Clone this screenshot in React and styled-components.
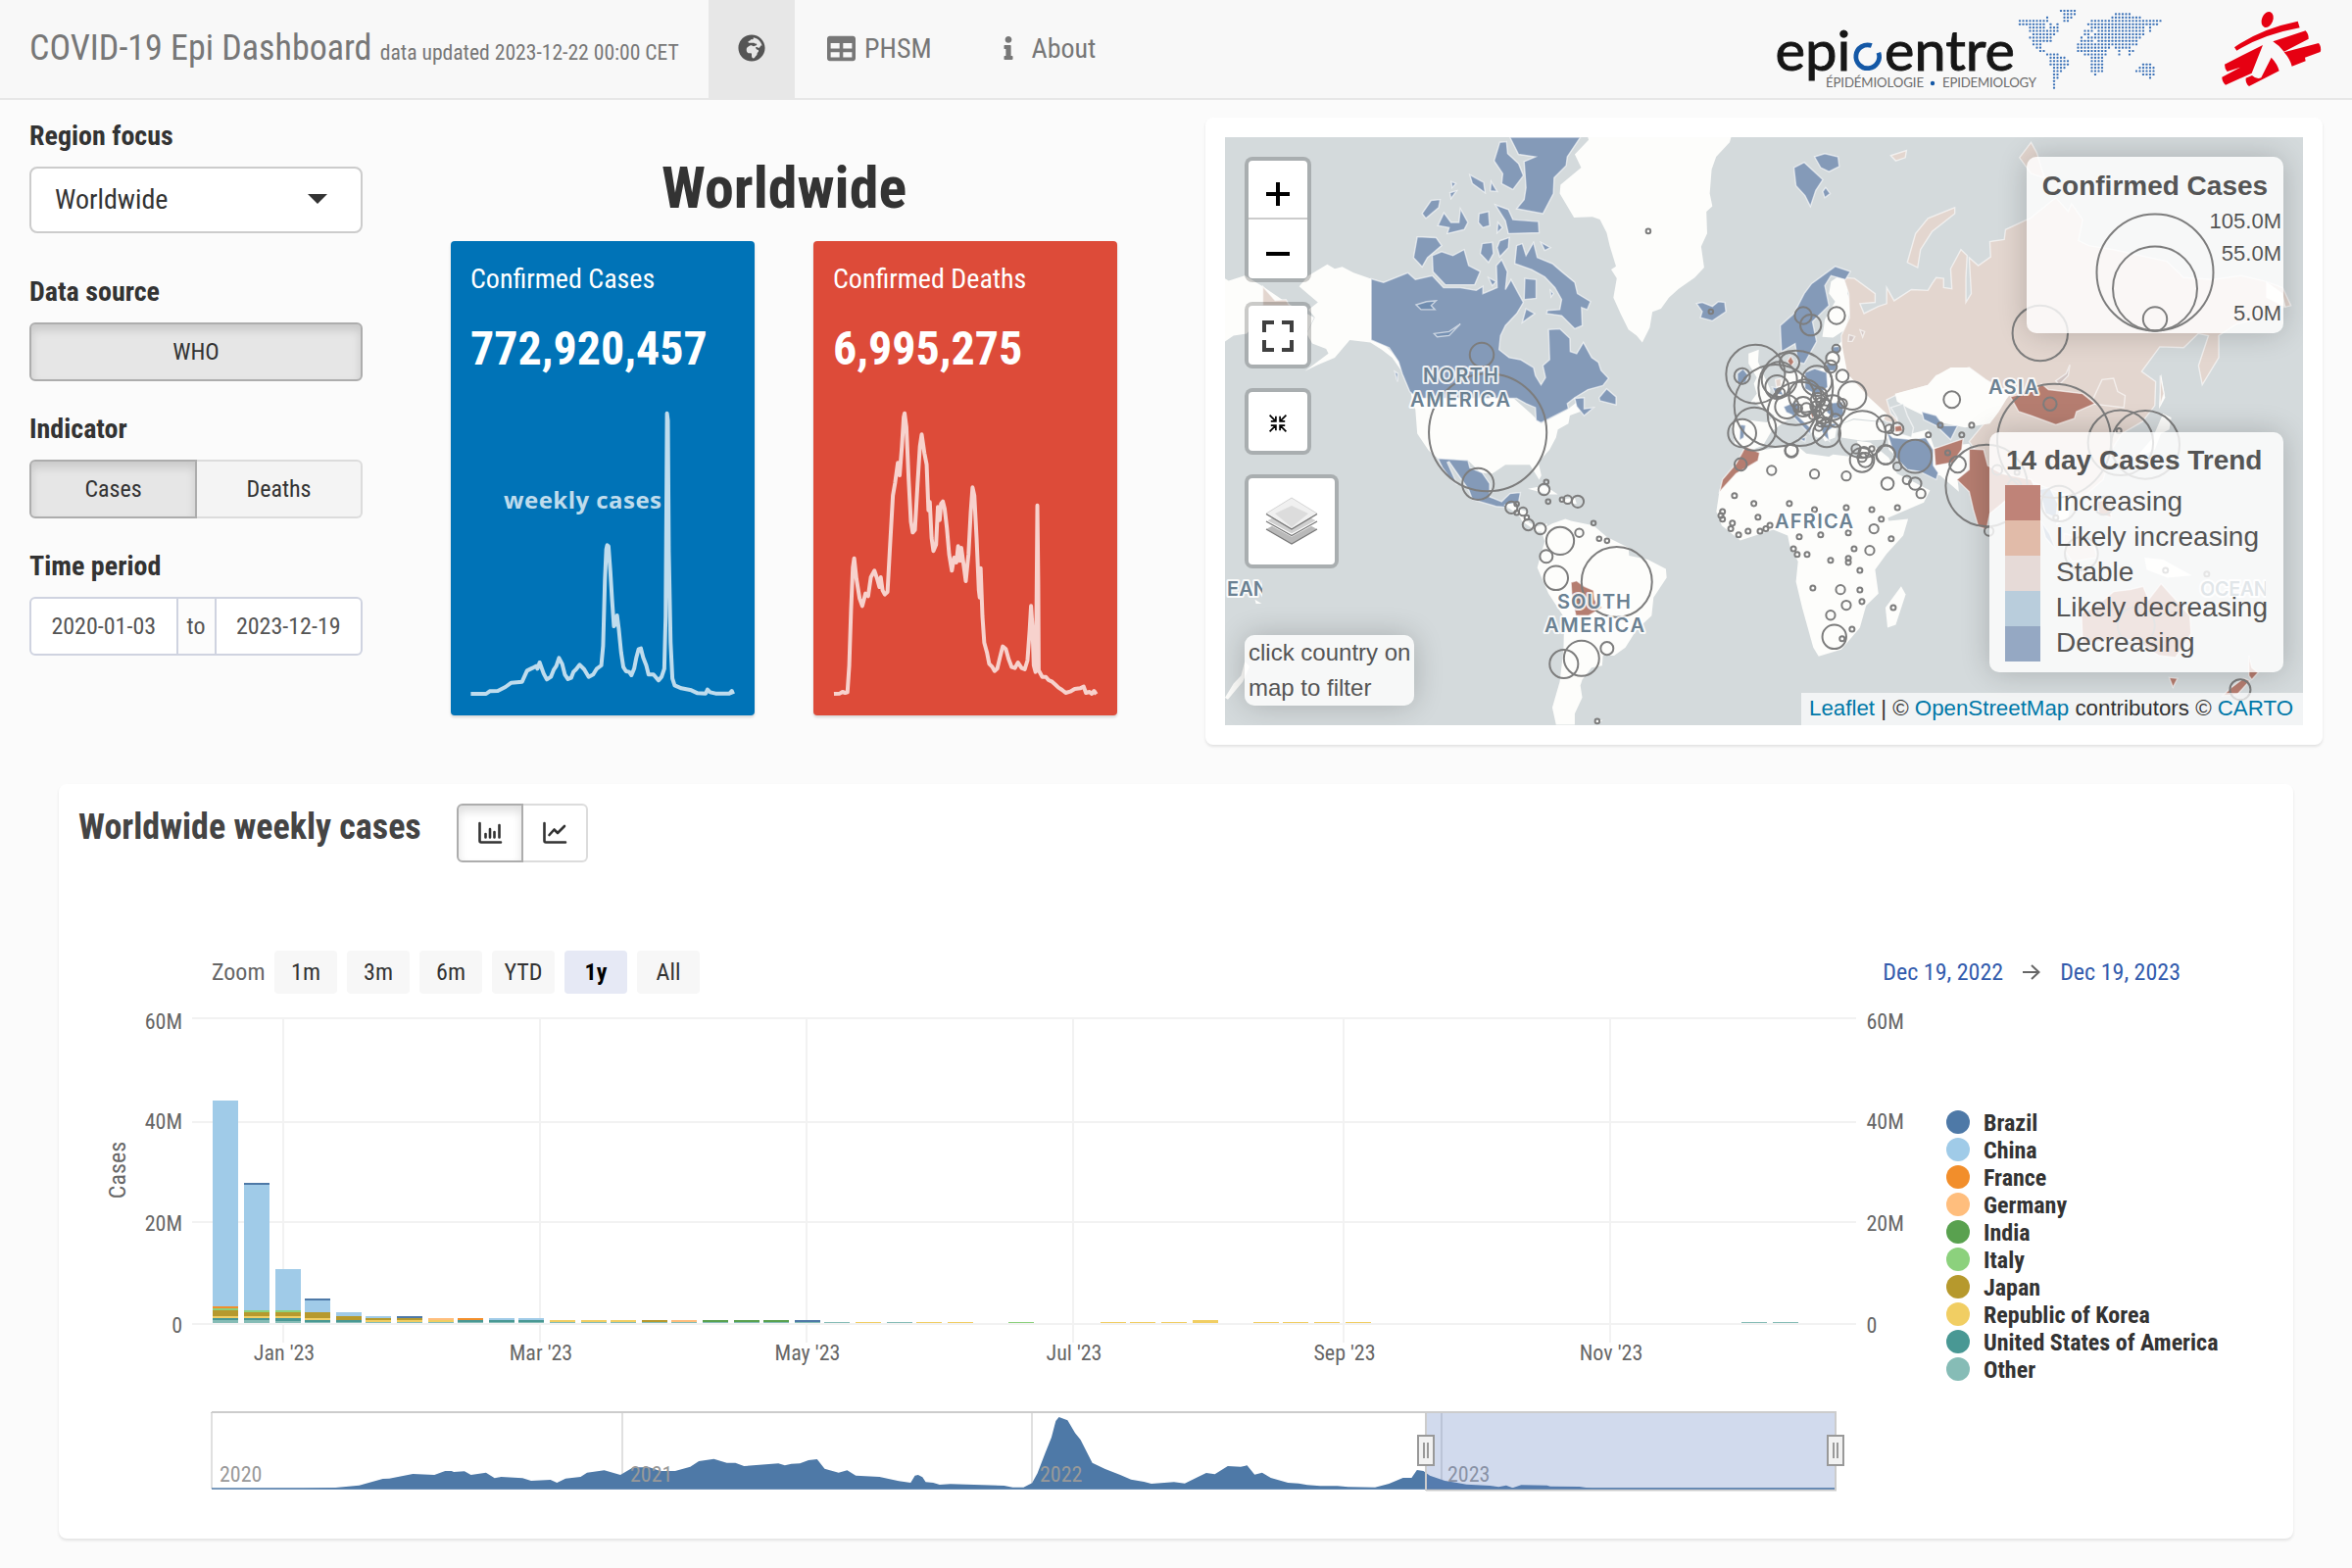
import React from "react";
import styled, { createGlobalStyle, css } from "styled-components";
import { FaGlobeAfrica, FaTable, FaInfo } from "react-icons/fa";

const condensed = `"Roboto Condensed", Roboto, "Liberation Sans", sans-serif`;
const arial = `"Liberation Sans", Arial, sans-serif`;

const GlobalStyle = createGlobalStyle`
  * { box-sizing: border-box; }
  body { margin: 0; background: #fbfbfb; font-family: ${condensed}; color: #333; }
  svg { display: block; }
`;

const Page = styled.div`
  width: 2400px;
  height: 1600px;
  overflow: hidden;
  background: #fbfbfb;
`;

/* ---------- header ---------- */
const Header = styled.header`
  height: 102px;
  display: flex;
  align-items: stretch;
  background: #f8f8f8;
  border-bottom: 2px solid #e7e7e7;
`;
const Brand = styled.div`
  width: 723px;
  padding-left: 30px;
  font-size: 36px;
  line-height: 98px;
  color: #777;
  white-space: nowrap;
`;
const Updated = styled.small`
  font-size: 21.6px;
`;
const NavTab = styled.a`
  display: flex;
  align-items: center;
  gap: ${(p) => p.$gap || 9}px;
  padding: 0 ${(p) => (p.$active ? 30 : 33)}px 2px;
  font-size: 28px;
  color: ${(p) => (p.$active ? "#555" : "#777")};
  background: ${(p) => (p.$active ? "#e7e7e7" : "transparent")};
`;
const Logos = styled.div`
  margin-left: auto;
`;

/* ---------- top row ---------- */
const TopRow = styled.div`
  display: flex;
  padding: 18px 30px 0;
`;
const Sidebar = styled.aside`
  width: 340px;
  margin-right: 90px;
`;
const Field = styled.div`
  margin-bottom: ${(p) => p.$gap || 30}px;
`;
const FieldLabel = styled.div`
  height: 40px;
  line-height: 38px;
  margin-bottom: 10px;
  font-size: 28px;
  font-weight: 700;
  color: #333;
`;
const Select = styled.div`
  height: 68px;
  padding: 0 34px 2px 24px;
  display: flex;
  align-items: center;
  justify-content: space-between;
  border: 2px solid #ccc;
  border-radius: 8px;
  background: #fff;
  font-size: 28px;
  color: #333;
`;
const Caret = styled.span`
  border: 10px solid transparent;
  border-top-color: #333;
  border-bottom: 0;
`;
const Group = styled.div`
  display: flex;
  height: 60px;
`;
const pressed = css`
  background: #e6e6e6;
  border-color: #adadad;
  box-shadow: inset 0 6px 10px rgba(0, 0, 0, 0.125);
  z-index: 1;
`;
const Toggle = styled.button`
  flex: ${(p) => (p.$width ? "none" : 1)};
  width: ${(p) => (p.$width ? p.$width + "px" : "auto")};
  padding: 0;
  display: flex;
  align-items: center;
  justify-content: center;
  font: 24px ${condensed};
  color: #333;
  background: #f4f4f4;
  border: 2px solid #dcdcdc;
  ${(p) => p.$active && pressed}
  ${(p) => p.$white && "background: #fff;"}
  &:first-child { border-radius: 6px 0 0 6px; }
  &:last-child { border-radius: 0 6px 6px 0; }
  &:only-child { border-radius: 6px; }
  & + & { border-left: 0; }
`;
const DateRange = styled.div`
  display: flex;
  height: 60px;
  border: 2px solid #cfd3e0;
  border-radius: 6px;
  background: #fff;
`;
const DateCell = styled.span`
  flex: ${(p) => (p.$mid ? "0 0 41px" : 1)};
  line-height: 56px;
  text-align: center;
  font-size: 24px;
  color: #555;
  ${(p) => p.$mid && "border: 2px solid #cfd3e0; border-width: 0 2px; background: #fcfcfc;"}
`;

const Stats = styled.section`
  width: 680px;
  margin-right: 90px;
  padding-top: 39px;
`;
const StatsTitle = styled.h1`
  margin: 0 0 21px;
  font-size: 60px;
  line-height: 66px;
  font-weight: 700;
  text-align: center;
  color: #333;
`;
const Cards = styled.div`
  display: flex;
  justify-content: space-between;
`;
const Card = styled.article`
  width: 310px;
  height: 484px;
  padding-top: 19px;
  border-radius: 4px;
  color: #fff;
  background: ${(p) => p.$color};
  box-shadow: 0 2px 3px rgba(0, 0, 0, 0.15);
`;
const CardTitle = styled.div`
  padding-left: 20px;
  font-size: 28px;
  line-height: 40px;
`;
const CardValue = styled.div`
  padding-left: 20px;
  margin-top: 21px;
  font-size: 48px;
  line-height: 60px;
  font-weight: 700;
`;

/* ---------- map ---------- */
const MapCard = styled.section`
  width: 1140px;
  height: 640px;
  padding: 20px;
  background: #fff;
  border-radius: 8px;
  box-shadow: 0 2px 3px rgba(0, 0, 0, 0.1);
`;
const MapFrame = styled.div`
  position: relative;
  width: 1100px;
  height: 600px;
  overflow: hidden;
  background: #d4dadc;
  font-family: ${arial};
`;
const MapControls = styled.div`
  position: absolute;
  left: 20px;
  top: 20px;
  display: flex;
  flex-direction: column;
  align-items: flex-start;
  gap: 20px;
`;
const Control = styled.div`
  border: 4px solid rgba(0, 0, 0, 0.2);
  border-radius: 8px;
  background: #fff;
  background-clip: padding-box;
`;
const ControlCell = styled.div`
  width: ${(p) => p.$size || 60}px;
  height: ${(p) => p.$height || p.$size || 60}px;
  padding-top: ${(p) => p.$drop || 0}px;
  display: flex;
  align-items: center;
  justify-content: center;
  & + & { border-top: 2px solid #ccc; }
`;
const Info = styled.div`
  position: absolute;
  background: rgba(255, 255, 255, 0.8);
  border-radius: 10px;
  box-shadow: 0 0 30px rgba(0, 0, 0, 0.2);
  color: #555;
`;
const Hint = styled(Info)`
  left: 20px;
  top: 508px;
  width: 173px;
  height: 72px;
  padding-left: 4px;
  font-size: 24px;
  line-height: 35.5px;
  white-space: nowrap;
`;
const SizeLegend = styled(Info)`
  right: 20px;
  top: 20px;
  width: 262px;
  height: 180px;
  padding-top: 14px;
`;
const LegendTitle = styled.div`
  font-size: 28px;
  line-height: 32px;
  font-weight: 700;
  text-align: center;
  white-space: nowrap;
`;
const TrendLegend = styled(Info)`
  right: 20px;
  top: 301px;
  width: 300px;
  height: 245px;
  padding: 12px 16px 0;
`;
const TrendTitle = styled(LegendTitle)`
  line-height: 33px;
  height: 32px;
  margin-bottom: 10px;
  text-align: left;
  padding-left: 1px;
`;
const TrendRow = styled.div`
  display: flex;
  gap: 16px;
  height: 36px;
  font-size: 28px;
  line-height: 34px;
  white-space: nowrap;
`;
const Swatch = styled.i`
  width: 36px;
  background: ${(p) => p.$color};
`;
const Attribution = styled.div`
  position: absolute;
  right: 0;
  bottom: 0;
  width: 512px;
  height: 33px;
  padding-right: 10px;
  text-align: right;
  font-size: 22.3px;
  line-height: 32px;
  color: #333;
  background: rgba(255, 255, 255, 0.7);
  white-space: nowrap;
`;
const MapLink = styled.a`
  color: #0078a8;
`;

/* ---------- chart card ---------- */
const ChartCard = styled.section`
  width: 2280px;
  height: 770px;
  margin: 40px 0 0 60px;
  background: #fff;
  border-radius: 8px;
  box-shadow: 0 2px 3px rgba(0, 0, 0, 0.1);
`;
const ChartHeader = styled.div`
  display: flex;
  gap: 36px;
  padding: 20px 20px 90px;
`;
const ChartTitle = styled.h2`
  margin: 0;
  width: 350px;
  font-size: 36px;
  line-height: 48px;
  font-weight: 700;
  color: #444;
  white-space: nowrap;
`;
const RangeRow = styled.div`
  display: flex;
  align-items: center;
  height: 44px;
  padding: 0 115px 0 156px;
  font-size: 24px;
  color: #666;
`;
const RangeCaption = styled.span`
  width: 64px;
`;
const RangeButton = styled.button`
  width: 64px;
  height: 44px;
  margin-right: 10px;
  padding: 0;
  border: 0;
  border-radius: 4px;
  font: ${(p) => (p.$active ? 700 : 400)} 24px ${condensed};
  color: ${(p) => (p.$active ? "#000" : "#333")};
  background: ${(p) => (p.$active ? "#e6e9f5" : "#f7f7f7")};
`;
const RangeDates = styled.div`
  margin-left: auto;
  display: flex;
  align-items: center;
  gap: 20px;
  color: #335cad;
`;
const ChartBody = styled.div`
  display: flex;
`;
const Legend = styled.ul`
  list-style: none;
  margin: 0;
  padding: 118px 0 0 26px;
`;
const LegendItem = styled.li`
  display: flex;
  align-items: center;
  gap: 14px;
  height: 28px;
  font-size: 24px;
  font-weight: 700;
  line-height: 30px;
  color: #333;
  white-space: nowrap;
`;
const Dot = styled.i`
  width: 24px;
  height: 24px;
  margin-top: -2px;
  border-radius: 50%;
  background: ${(p) => p.$color};
`;

/* ---------- logos ---------- */
const DOT_ROWS = [
  [[12, 16]],
  [[13, 16], [28, 32]],
  [[8, 8], [13, 15], [27, 35]],
  [[0, 8], [13, 14], [21, 41]],
  [[0, 7], [9, 9], [11, 11], [20, 40]],
  [[3, 7], [9, 11], [21, 36], [38, 38]],
  [[3, 11], [19, 21], [23, 36], [38, 38]],
  [[4, 10], [19, 20], [22, 36]],
  [[3, 9], [18, 18], [20, 35]],
  [[4, 9], [18, 21], [23, 34]],
  [[4, 6], [17, 34]],
  [[5, 6], [17, 26], [28, 32]],
  [[6, 7], [17, 25], [29, 29], [32, 33]],
  [[8, 11], [19, 25], [29, 29], [32, 32]],
  [[9, 13], [21, 24]],
  [[9, 14], [21, 24]],
  [[9, 14], [21, 24], [36, 38]],
  [[10, 13], [21, 24], [35, 39]],
  [[10, 12], [21, 24], [34, 39]],
  [[10, 11], [22, 22], [36, 39]],
  [[10, 11], [38, 38]],
  [[10, 10]],
  [[10, 10]],
  [[10, 10]],
];

function HeaderLogos() {
  const dots = [];
  DOT_ROWS.forEach((row, j) =>
    row.forEach(([a, b]) => {
      for (let i = a; i <= b; i++) dots.push([2061 + i * 3.5, 11 + j * 3.42]);
    })
  );
  return (
    <svg width="620" height="100" viewBox="1780 0 620 100">
      <g fill="#161616" stroke="#161616" strokeWidth=".9" fontFamily='Lato, "Liberation Sans", sans-serif' fontSize="56">
        <text x="1811.5" y="71.500" textLength="77" lengthAdjust="spacingAndGlyphs">epi</text>
        <text x="1923" y="71.500" textLength="133" lengthAdjust="spacingAndGlyphs">entre</text>
      </g>
      <path d="M1909.800 46.600A11.900 11.900 0 1 0 1916.900 53.700" fill="none" stroke="#1458a6" strokeWidth="4.800" />
      <g fill="#6b6b6b" fontFamily='Lato, "Liberation Sans", sans-serif' fontSize="13.200">
        <text x="1863" y="89" textLength="100">ÉPIDÉMIOLOGIE</text>
        <text x="1982" y="89" textLength="96">EPIDEMIOLOGY</text>
      </g>
      <circle cx="1972" cy="85" r="2.200" fill="#1458a6" />
      <g fill="#3d73b8">
        {dots.map(([x, y], i) => (
          <rect key={i} x={x - 1.05} y={y - 1.05} width="2.1" height="2.1" rx="0.6" />
        ))}
      </g>
      <g transform="translate(2050 0) scale(.33333)" fill="#e60012">
        <ellipse cx="791" cy="60" rx="17" ry="25" transform="rotate(22 791 60)" />
        <path d="M690 145Q770 88 884 65L890 85Q780 105 697 155Z" />
        <path d="M808 127L908 94Q918 105 917 119L842 158Q828 140 808 127Z" />
        <path d="M842 160L948 132Q958 145 953 159L906 176 908 187 866 203Q860 180 842 160Z" />
        <path d="M660 197L777 138 743 224 663 260Q652 250 652 236L708 206 668 219Q660 210 660 197Z" />
        <path d="M803 176Q822 196 827 217L735 264Q723 255 725 239L744 231Q758 244 772 238Z" />
      </g>
    </svg>
  );
}

/* ---------- sparklines ---------- */
const CASES_LINE =
  "M88 1437L122 1437 130 1429 148 1428 165 1416 178 1403 202 1400 213 1366 225 1358 233 1352 236 1360 241 1341 250 1375 257 1393 266 1385 272 1364 278 1352 284 1327 291 1345 297 1378 304 1392 311 1388 316 1370 322 1362 330 1348 340 1362 350 1385 360 1378 368 1360 378 1350 382 1290 386 1090 389 995 391 982 394 985 398 1060 402 1150 406 1230 410 1222 413 1197 417 1240 422 1310 427 1355 433 1368 440 1370 445 1380 451 1360 456 1325 461 1300 466 1298 471 1325 478 1350 483 1378 494 1378 505 1396 512 1385 518 1360 521 1200 523 800 524 578 526 600 528 1000 532 1280 536 1390 541 1411 556 1420 578 1426 592 1435 610 1436 614 1424 620 1432 632 1436 663 1436 668 1428 671 1438";
const DEATHS_LINE =
  "M895 1437L908 1436 914 1431 920 1434 925 1432 929 1350 933 1180 937 1050 940 1022 945 1085 952 1145 958 1168 965 1130 971 1138 977 1080 985 1060 991 1085 996 1110 999 1080 1003 1120 1008 1133 1014 1125 1019 1000 1026 830 1031 790 1037 730 1041 768 1046 680 1050 590 1052 578 1056 620 1061 780 1066 910 1070 943 1075 935 1081 790 1086 680 1090 643 1096 700 1101 735 1105 875 1108 850 1112 960 1116 1000 1122 980 1126 865 1130 905 1133 855 1137 848 1141 870 1146 930 1151 1010 1157 1060 1162 1020 1167 1035 1171 985 1175 1030 1178 990 1182 1030 1188 1092 1194 1010 1199 880 1203 805 1207 830 1212 960 1217 1120 1219 1142 1221 1052 1225 1200 1229 1280 1235 1310 1240 1345 1247 1355 1252 1367 1258 1360 1264 1325 1270 1292 1277 1300 1283 1330 1290 1355 1297 1358 1304 1341 1312 1358 1319 1362 1325 1335 1330 1240 1333 1168 1336 1230 1339 1350 1343 1370 1345 1200 1347 860 1349 1100 1350 1365 1358 1385 1366 1385 1372 1395 1380 1400 1388 1410 1394 1418 1402 1425 1410 1434 1420 1430 1430 1422 1442 1420 1450 1415 1455 1434 1463 1431 1468 1437 1473 1428 1478 1438";

function Sparkline({ left, d, label }) {
  return (
    <svg width="310" height="341" viewBox={`${left} 387 310 341`}>
      <g transform="translate(440 230) scale(.45918 .33333)">
        <path d={d} fill="none" stroke="#fff" strokeOpacity=".75" strokeWidth="4" strokeLinejoin="round" vectorEffect="non-scaling-stroke" />
      </g>
      {label && (
        <text x="514" y="520" textLength="161" fill="#fff" fillOpacity=".75" fontFamily='"Open Sans", "Noto Sans", sans-serif' fontWeight="700" fontSize="24">
          {label}
        </text>
      )}
    </svg>
  );
}

/* ---------- map geometry ---------- */
const BLUE = "#849ab8";
const RED = "#b57d70";
const PINK = "#e3d6cf";
const LAND = "#fdfdfb";

const WEST = [
  [LAND, "1020,49 1402,49 1398,62 1362,98 1350,130 1345,190 1352,222 1336,235 1338,290 1322,322 1330,375 1305,400 1262,428 1236,450 1215,478 1192,486 1185,525 1165,562 1150,545 1128,530 1108,492 1088,450 1097,402 1082,380 1095,372 1078,320 1070,288 1052,255 1032,248 983,250 945,190 947,168 1002,125 985,92 1022,56"],
  [LAND, "442,403 442,556 478,568 520,610 522,632 498,600 470,580 440,562 385,556 345,600 300,618 265,634 328,590 322,578 285,565 270,540 292,500 275,480 300,462 272,440 250,422 275,395 325,367 345,378 365,373 395,388"],
  [LAND, "548,690 560,730 565,790 595,832 620,852 700,857 735,888 765,890 800,868 865,868 880,890 890,905 896,895 888,862 918,830 935,800 940,780 968,765 972,745 1000,735 990,712 965,730 895,765 868,740 820,700"],
  [LAND, "52,402 62,408 105,395 153,422 220,465 290,500 270,540 225,500 155,490 110,540 75,545 52,560"],
  [PINK, "153,422 186,457 215,455 224,470 153,470"],
  [BLUE, "442,403 475,412 540,388 560,405 605,395 635,425 680,425 722,432 740,422 740,440 778,425 776,370 790,355 805,385 800,430 815,405 835,440 848,462 830,490 800,520 787,545 783,580 810,600 840,605 875,625 880,645 895,668 907,650 900,620 918,605 915,530 945,528 972,552 973,585 990,590 1008,562 1030,600 1048,612 1055,632 1075,652 1060,670 1020,680 985,700 965,715 968,728 895,763 882,757 880,725 855,715 830,702 565,702 545,685 525,640 515,610 490,575 442,556"],
  [BLUE, "812,49 1000,49 965,98 962,120 930,150 928,190 900,240 830,228 850,205 855,175 850,110 880,98 835,92"],
  [BLUE, "785,62 803,60 806,90 835,115 848,145 820,180 790,165 793,140 770,108"],
  [BLUE, "578,240 602,207 626,205 622,225 588,252"],
  [BLUE, "636,238 655,262 676,262 680,228 700,262 690,280 645,290 650,275 620,270"],
  [BLUE, "730,240 755,235 758,270 740,275 728,262"],
  [BLUE, "773,218 808,230 820,255 888,260 890,288 808,290 800,258"],
  [BLUE, "780,262 792,275 778,288"],
  [BLUE, "705,143 742,162 746,188 712,165"],
  [BLUE, "762,160 778,185 760,183"],
  [BLUE, "652,188 670,183 655,202"],
  [BLUE, "656,160 668,165 658,175"],
  [BLUE, "565,298 615,300 630,320 592,350 578,373 555,350"],
  [BLUE, "605,345 630,335 660,345 690,330 702,370 733,385 718,418 640,418 607,385"],
  [BLUE, "738,315 765,312 768,340 755,362 733,340"],
  [BLUE, "785,308 810,300 808,325 785,348 778,325"],
  [BLUE, "830,320 845,315 855,345 875,312 885,350 925,365 950,385 985,412 992,440 1027,460 1018,480 1003,475 1005,520 985,528 950,495 910,490 912,482 945,480 950,455 932,425 905,398 870,380 825,365"],
  [BLUE, "852,402 882,405 882,452 850,455"],
  [BLUE, "855,478 878,490 845,512"],
  [BLUE, "895,312 920,325 905,332"],
  [BLUE, "755,400 775,410 765,420"],
  [BLUE, "920,432 928,440 922,448"],
  [BLUE, "1050,700 1070,678 1095,698 1095,718 1052,708"],
  [BLUE, "985,702 1010,700 1010,728 1035,725 1010,745 990,722"],
  [BLUE, "505,635 513,640 512,660"],
  [BLUE, "620,852 700,857 705,875 738,888 758,915 758,948 790,960 812,940 840,937 835,962 808,975 775,972 712,955 702,930 672,890 650,860 645,862 672,918 655,905 632,875"],
  ["#6f8caf", "562,468 590,460 615,458 602,470 612,480 575,480"],
  ["#7590b2", "610,540 650,535 680,516 650,545 618,548"],
  [LAND, "795,968 828,962 835,978 858,985 862,1012 885,1022 912,1015 905,1035 885,1035 845,1010 835,992"],
  [LAND, "895,1030 925,1015 960,1003 975,1008 1035,1020 1070,1048 1100,1062 1128,1075 1130,1095 1180,1105 1228,1128 1230,1150 1195,1200 1190,1245 1150,1280 1120,1325 1090,1345 1060,1345 1058,1370 1030,1375 1005,1405 1000,1420 1005,1450 985,1490 985,1518 935,1518 925,1475 945,1410 955,1330 957,1250 915,1190 885,1125 895,1090 905,1060"],
  [RED, "975,1162 990,1158 1010,1172 1035,1182 1038,1205 1058,1225 1022,1245 988,1245 978,1205"],
  [LAND, "860,928 905,920 940,942 915,942"],
  [LAND, "945,955 985,950 990,966 950,962"],
  [BLUE, "1310,465 1325,462 1352,472 1368,460 1385,462 1388,485 1352,508 1320,500 1325,485"],
  [LAND, "1035,1508 1060,1506 1045,1516"],
  [LAND, "105,1360 118,1372 100,1410 60,1455 52,1450 75,1415 95,1395"],
  [LAND, "132,1205 150,1215 135,1215"],
];

const EAST = [
  [BLUE, "215,125 240,112 285,155 268,182 255,222 242,195 220,170"],
  [BLUE, "265,98 290,90 322,98 325,122 300,135 280,125"],
  [BLUE, "285,185 292,175 303,190 290,200"],
  [PINK, "450,95 488,82 485,100 462,108"],
  [PINK, "605,225 605,240 550,285 522,330 515,375 490,362 510,290 540,252"],
  [PINK, "790,62 804,88 822,150 790,140 762,100"],
  [LAND, "305,410 330,392 347,412 345,440 355,470 340,530 310,550 284,548 290,505 315,460 300,440"],
  [PINK, "335,400 362,402 412,440 412,462 375,465 385,490 420,472 440,465 440,425 458,458 500,430 540,432 550,415 560,400 578,402 578,425 598,428 595,378 620,330 635,345 632,400 632,462 645,440 640,350 662,370 692,348 690,310 725,305 728,280 790,250 850,200 880,235 888,215 915,255 905,308 930,320 990,330 1120,360 1160,400 1230,405 1300,395 1360,410 1400,425 1420,470 1380,480 1360,500 1290,515 1245,545 1245,600 1205,668 1196,620 1220,545 1195,540 1160,575 1102,573 1058,635 1092,660 1090,720 1060,760 1010,790 985,830 965,905 920,945 860,940 780,905 690,880 640,810 660,785 700,735 740,690 680,655 640,625 560,645 540,670 470,690 440,705 450,740 475,765 440,760 395,725 370,680 345,650 332,600 330,545 350,500 348,440"],
  [LAND, "460,690 540,668 560,645 595,625 640,625 680,655 738,690 712,735 690,765 630,775 560,760 490,725 465,710"],
  [LAND, "1105,640 1115,700 1100,728"],
  [PINK, "1103,645 1112,690 1103,720"],
  [LAND, "1360,410 1400,440 1408,475 1360,450"],
  [PINK, "935,715 962,655 990,652 1000,685 1018,695 1015,725"],
  [RED, "740,698 800,682 815,665 832,680 915,690 945,715 900,735 895,752 850,768 790,745 760,735"],
  ["#d0c4c2", "850,658 875,640 884,618 880,645 858,668"],
  [LAND, "105,590 130,580 128,610 140,640 158,680 155,702 110,712 125,690 118,665 125,650 105,615"],
  [BLUE, "78,640 92,628 105,645 98,662 78,665"],
  [LAND, "62,765 75,752 120,758 150,762 168,745 130,720 118,708 165,692 180,665 200,635 245,640 290,625 300,590 330,560 345,640 398,700 440,740 430,760 360,752 320,770 315,800 290,810 270,770 255,745 285,800 270,800 235,765 215,745 190,762 160,785 140,820 110,832 72,815"],
  [LAND, "320,770 360,755 430,762 448,780 440,805 380,808 330,800"],
  [LAND, "95,825 135,832 220,818 245,840 300,848 310,842 390,852 382,870 400,900 425,950 445,1008 492,1003 480,1045 440,1090 412,1130 420,1190 390,1220 375,1275 330,1330 275,1347 262,1325 235,1225 220,1160 225,1110 205,1070 200,1045 165,1030 85,1057 40,1020 27,985 35,930 75,875"],
  [LAND, "368,808 400,812 445,850 465,890 495,905 545,932 530,962 440,1002 430,992 405,930 385,880"],
  [LAND, "440,765 480,770 500,790 540,780 555,825 640,815 660,860 612,905 615,935 570,895 500,880 445,830"],
  [RED, "98,822 132,838 128,858 75,890 35,935 42,905 75,865"],
  [LAND, "475,1172 486,1192 462,1268 442,1275 437,1225"],
  [BLUE, "440,785 455,800 500,805 535,800 553,830 553,870 565,888 560,905 520,885 490,880 460,848"],
  [BLUE, "525,735 560,745 578,770 612,770 595,805 560,770 530,755"],
  [RED, "555,828 600,812 625,803 622,830 600,862 558,870"],
  [RED, "640,828 675,830 685,870 720,890 790,905 800,925 762,925 720,965 690,990 682,1030 662,1022 650,980 640,935 610,905 640,880"],
  [BLUE, "182,520 215,490 240,440 258,415 315,372 352,385 340,405 305,395 290,420 300,470 260,510 270,560 240,615 225,612 218,565 185,585"],
  ["#d4dadc", "450,725 480,715 490,745 505,775 500,800 470,790 465,750"],
  [BLUE, "810,930 835,925 855,965 850,1000 825,990"],
  [LAND, "855,935 890,950 880,1000 850,1020 860,975"],
  [BLUE, "815,1010 835,1040 850,1080 825,1050"],
  [PINK, "870,1040 940,1060 950,1100 890,1110 870,1080"],
  [RED, "950,960 975,955 985,1000 955,990"],
  [LAND, "1065,1100 1110,1105 1180,1145 1120,1150 1070,1130"],
  [LAND, "1110,740 1130,750 1125,780 1105,790 1090,830 1040,855 1085,800"],
  [RED, "912,1240 955,1215 990,1185 1030,1180 1062,1172 1075,1205 1105,1165 1175,1245 1178,1290 1140,1350 1100,1345 1040,1305 985,1305 915,1315"],
  [RED, "1125,1400 1145,1402 1134,1424"],
  [RED, "1318,1345 1325,1375 1340,1388 1325,1405 1318,1395"],
  [RED, "1305,1402 1320,1408 1290,1442 1255,1445 1275,1425"],
];

/* detail of Europe, drawn at three times the map scale */
const EUROPE = [
  [BLUE, "305,240 335,228 372,240 375,285 345,310 305,290"],
  [BLUE, "375,335 420,330 425,372 395,382 372,362"],
  [BLUE, "240,345 275,330 292,345 275,365 325,412 320,428 288,395 265,370 248,362"],
  [BLUE, "350,400 410,395 375,420 380,450 362,432"],
  [BLUE, "288,443 308,438 305,452"],
  [BLUE, "107,400 124,402 118,440 105,448"],
  [BLUE, "370,212 405,215 398,235 372,235"],
  [BLUE, "388,162 412,160 410,182 392,178"],
  [BLUE, "205,285 230,290 240,310 215,305"],
  [RED, "252,205 262,190 272,208 262,222"],
  [RED, "580,405 600,402 605,420 582,422"],
  [RED, "320,360 335,362 330,385"],
  [PINK, "215,262 232,258 232,282 218,284"],
  ["#d4c8c6", "440,125 458,130 450,145 438,145"],
  ["#d4c8c6", "474,110 488,115 482,132"],
];

const W_CIRCLES = [
  [753, 787, 157], [737, 593, 32], [727, 916, 42], [1181, 284, 6], [1348, 485, 6],
  [903, 930, 15], [909, 911, 6], [914, 960, 6], [951, 955, 6], [966, 955, 11], [993, 960, 16],
  [816, 975, 16], [830, 988, 6], [830, 966, 6], [847, 985, 11], [857, 1000, 6], [861, 1018, 15], [893, 1028, 15],
  [946, 1058, 37], [997, 1038, 11], [1035, 1014, 6], [1050, 1053, 6], [1071, 1058, 6], [909, 1097, 17],
  [935, 1151, 32], [1097, 1161, 94], [993, 1210, 6], [1003, 1352, 47], [956, 1366, 38], [1071, 1327, 17], [1045, 1509, 6],
];
const E_CIRCLES = [
  [812, 539, 67], [598, 705, 20], [846, 808, 138], [836, 716, 16], [1007, 813, 79], [1067, 818, 83], [1003, 783, 6],
  [682, 920, 99], [588, 838, 6], [612, 867, 20], [688, 1034, 11], [570, 769, 6], [646, 769, 6], [622, 793, 6], [541, 793, 6],
  [509, 847, 40], [708, 881, 12], [756, 887, 6], [750, 920, 16], [793, 935, 9], [858, 965, 43], [912, 1090, 40], [966, 970, 22], [850, 1000, 6],
  [1116, 1132, 6], [1216, 1141, 6], [1045, 1270, 45], [1297, 1430, 25],
  [161, 882, 11], [265, 891, 11], [342, 896, 11], [209, 832, 15], [71, 945, 6], [118, 965, 6], [204, 965, 6], [265, 980, 6],
  [342, 975, 6], [404, 980, 6], [466, 975, 6], [427, 1004, 6], [409, 1028, 11], [451, 1053, 6], [347, 1038, 6], [280, 1043, 6],
  [228, 1048, 6], [214, 1078, 6], [223, 1092, 6], [247, 1092, 6], [304, 1107, 6], [347, 1102, 6], [347, 1112, 6], [361, 1078, 6],
  [399, 1082, 11], [375, 1132, 6], [261, 1176, 6], [328, 1180, 11], [375, 1181, 6], [380, 1210, 6], [342, 1219, 11],
  [304, 1244, 11], [356, 1279, 6], [313, 1298, 29], [332, 1303, 6], [456, 1225, 6],
  [128, 999, 6], [42, 985, 6], [38, 995, 6], [42, 1004, 6], [66, 1014, 6], [62, 1028, 6], [81, 1043, 6], [104, 1034, 6],
  [133, 1034, 6], [147, 1028, 6], [157, 1019, 6], [86, 867, 15], [438, 843, 23], [442, 915, 15], [466, 872, 10],
  [489, 906, 10], [509, 915, 15], [523, 940, 11],
];
const Z_CIRCLES = [
  [300, 66, 26], [323, 95, 32], [402, 66, 26], [401, 167, 12], [390, 197, 20], [384, 222, 19], [420, 251, 19],
  [154, 245, 90], [113, 251, 24], [258, 210, 30], [277, 287, 114], [215, 342, 126], [151, 413, 66], [113, 426, 43],
  [227, 262, 54], [220, 285, 36], [342, 266, 46], [250, 345, 36], [289, 367, 98], [450, 311, 43], [420, 335, 14], [390, 348, 38],
  [306, 312, 50], [300, 345, 30], [345, 325, 22], [351, 308, 22], [338, 345, 16], [370, 340, 16], [330, 372, 12], [352, 330, 12], [340, 365, 10],
  [362, 368, 28], [355, 392, 14], [370, 392, 14], [348, 407, 12], [398, 387, 20], [372, 427, 42], [481, 430, 72],
  [551, 397, 26], [564, 413, 13], [588, 413, 19], [264, 480, 20], [480, 508, 37], [462, 474, 14], [486, 484, 16], [510, 474, 8],
  [480, 500, 14], [490, 508, 22], [552, 492, 29], [230, 302, 14], [285, 350, 12], [310, 352, 18],
];

const PlaceLabel = styled.text`
  font-family: Inter, "Liberation Sans", sans-serif;
  font-size: 20px;
  font-weight: 600;
  fill: #6b8192;
  stroke: rgba(255, 255, 255, 0.85);
  stroke-width: 4px;
  stroke-linejoin: round;
  paint-order: stroke;
`;

const shapes = (list) =>
  list.map(([fill, points], i) => (
    <polygon key={i} points={points} fill={fill} stroke="#fff" strokeOpacity={fill === LAND ? 0 : 0.6} strokeWidth="1.4" vectorEffect="non-scaling-stroke" />
  ));

function WorldMap() {
  return (
    <svg width="1100" height="600" viewBox="1250 140 1100 600">
      <g transform="translate(1230 120) scale(.38265 .40816)">{shapes(WEST)}</g>
      <g transform="translate(1740 120) scale(.42092 .40816)">{shapes(EAST)}</g>
      <g transform="translate(1740 300) scale(.33333)">{shapes(EUROPE)}</g>
      <g fill="none" stroke="#7d7d7d" strokeWidth="2">
        {W_CIRCLES.map(([x, y, r], i) => (
          <circle key={"w" + i} cx={1230 + x * 0.38265} cy={120 + y * 0.40816} r={r * 0.38265} />
        ))}
        {E_CIRCLES.map(([x, y, r], i) => (
          <circle key={"e" + i} cx={1740 + x * 0.42092} cy={120 + y * 0.40816} r={r * 0.42092} />
        ))}
        {Z_CIRCLES.map(([x, y, r], i) => (
          <circle key={"z" + i} cx={1740 + x / 3} cy={300 + y / 3} r={r / 3} />
        ))}
      </g>
      <PlaceLabel x="1452" y="390" textLength="77">NORTH</PlaceLabel>
      <PlaceLabel x="1439" y="415" textLength="102">AMERICA</PlaceLabel>
      <PlaceLabel x="1589" y="621" textLength="75">SOUTH</PlaceLabel>
      <PlaceLabel x="1576" y="645" textLength="102">AMERICA</PlaceLabel>
      <PlaceLabel x="1811" y="539" textLength="80">AFRICA</PlaceLabel>
      <PlaceLabel x="2029" y="402" textLength="51">ASIA</PlaceLabel>
      <svg x="1250" y="590" width="38" height="30">
        <PlaceLabel x="2" y="18" textLength="42">EAN</PlaceLabel>
      </svg>
      <svg x="2240" y="590" width="72" height="30">
        <PlaceLabel x="5" y="18" textLength="70">OCEAN</PlaceLabel>
      </svg>
    </svg>
  );
}

function LayersIcon() {
  return (
    <svg width="54" height="50" viewBox="0 0 54 50">
      <path d="M1 33L27 19 53 33 27 48Z" fill="#b9b9b9" />
      <path d="M1 33L27 48 53 33" fill="none" stroke="#777" strokeWidth="1.2" />
      <path d="M1 25L27 11 53 25 27 39Z" fill="#d0d0d0" />
      <path d="M1 25L27 39 53 25" fill="none" stroke="#fff" strokeWidth="3" />
      <path d="M1 25L27 39.500 53 25" fill="none" stroke="#777" strokeWidth="1.2" />
      <path d="M1 17L27 1 53 17 27 33Z" fill="#f0f0f0" stroke="#ccc" strokeWidth=".8" />
      <path d="M10 17L27 9 44 17 27 31Z" fill="#dcdcdc" />
      <path d="M1 17.500L27 33 53 17.500" fill="none" stroke="#777" strokeWidth="1.4" />
    </svg>
  );
}

const TREND = [
  ["Increasing", "#bf8378"],
  ["Likely increasing", "#e1bba9"],
  ["Stable", "#e6dad7"],
  ["Likely decreasing", "#b9cddc"],
  ["Decreasing", "#95a8c3"],
];

/* ---------- weekly chart ---------- */
const C = {
  br: "#4e79a7", cn: "#a0cbe8", fr: "#f28e2b", de: "#ffbe7d", in: "#59a14f",
  it: "#8cd17d", jp: "#b6992d", kr: "#f1ce63", us: "#499894", ot: "#86bcb6",
};
const COUNTRIES = [
  ["Brazil", C.br], ["China", C.cn], ["France", C.fr], ["Germany", C.de], ["India", C.in],
  ["Italy", C.it], ["Japan", C.jp], ["Republic of Korea", C.kr], ["United States of America", C.us], ["Other", C.ot],
];
/* every bar: left edge, top, then [colour, bottom] from the top down */
const BARS = [
  [217, 1123, ["cn", 1333], ["fr", 1335], ["it", 1337], ["jp", 1343], ["kr", 1345], ["us", 1347], ["ot", 1350]],
  [249, 1207, ["br", 1209], ["cn", 1337], ["it", 1339], ["jp", 1343], ["kr", 1345], ["us", 1347], ["ot", 1350]],
  [281, 1295, ["cn", 1337], ["it", 1339], ["jp", 1343], ["kr", 1345], ["us", 1348], ["ot", 1350]],
  [311, 1325, ["br", 1327], ["cn", 1339], ["jp", 1345], ["kr", 1347], ["us", 1349], ["ot", 1350]],
  [343, 1339, ["cn", 1343], ["jp", 1347], ["us", 1349], ["ot", 1350]],
  [373, 1343, ["cn", 1345], ["jp", 1347], ["kr", 1349], ["ot", 1350]],
  [405, 1343, ["br", 1345], ["jp", 1347], ["kr", 1349], ["ot", 1350]],
  [437, 1345, ["de", 1347], ["kr", 1349], ["ot", 1350]],
  [467, 1345, ["fr", 1347], ["us", 1349], ["ot", 1350]],
  [499, 1345, ["cn", 1347], ["us", 1349], ["ot", 1350]],
  [529, 1345, ["cn", 1347], ["us", 1349], ["ot", 1350]],
  [561, 1347, ["kr", 1349], ["ot", 1350]],
  [593, 1347, ["kr", 1349], ["ot", 1350]],
  [623, 1347, ["kr", 1349], ["ot", 1350]],
  [655, 1347, ["jp", 1349], ["ot", 1350]],
  [685, 1347, ["de", 1349], ["ot", 1350]],
  [717, 1347, ["in", 1349], ["ot", 1350]],
  [749, 1347, ["in", 1349], ["ot", 1350]],
  [779, 1347, ["in", 1349], ["ot", 1350]],
  [811, 1347, ["br", 1349], ["ot", 1350]],
  [841, 1349, ["ot", 1350]],
  [873, 1349, ["kr", 1350]],
  [905, 1349, ["ot", 1350]],
  [935, 1349, ["kr", 1350]],
  [967, 1349, ["kr", 1350]],
  [1029, 1349, ["it", 1350]],
  [1123, 1349, ["kr", 1350]],
  [1153, 1349, ["kr", 1350]],
  [1185, 1349, ["kr", 1350]],
  [1217, 1347, ["kr", 1350]],
  [1279, 1349, ["kr", 1350]],
  [1309, 1349, ["kr", 1350]],
  [1341, 1349, ["kr", 1350]],
  [1373, 1349, ["kr", 1350]],
  [1777, 1349, ["ot", 1350]],
  [1809, 1349, ["ot", 1350]],
];
const Y_TICKS = [[1039, 1049.5, "60M"], [1145, 1152, "40M"], [1247, 1256, "20M"], [1351, 1359.5, "0"]];
const X_TICKS = [[289, "Jan '23"], [551, "Mar '23"], [823, "May '23"], [1095, "Jul '23"], [1371, "Sep '23"], [1643, "Nov '23"]];
const YEARS = [[216, "2020"], [635, "2021"], [1053, "2022"], [1471, "2023"]];

const AxisText = styled.text`
  font-family: ${condensed};
  font-size: ${(p) => p.$size || 22}px;
  fill: ${(p) => p.$color || "#666"};
  text-anchor: ${(p) => p.$anchor || "middle"};
`;

const NAV_AREA =
  "M33 358L118 356 148 354 170 347 192 327 198 326 220 312 240 315 250 303 256 303 258 306 268 304 274 315 288 308 296 325 302 321 322 325 330 333 348 330 354 339 362 326 376 321 382 308 398 301 413 315 425 292 440 292 450 303 464 303 478 290 486 273 500 266 512 278 520 278 528 288 560 280 566 286 572 281 580 280 588 270 596 267 603 296 616 308 624 301 632 317 654 321 672 334 683 339 687 317 690 315 694 322 697 337 704 339 710 345 720 343 770 348 778 353 788 353 796 340 801 310 808 250 814 200 818 150 821 138 829 148 836 187 841 207 852 278 864 297 878 315 888 329 900 336 907 342 928 337 938 341 950 322 958 309 966 313 978 288 990 290 996 286 1003 314 1010 308 1018 324 1034 339 1044 341 1052 346 1064 349 1080 349 1090 352 1115 353 1128 342 1141 324 1149 324 1154 300 1160 303 1166 317 1180 333 1190 338 1200 344 1222 348 1230 352 1237 347 1243 355 1251 346 1275 347 1278 350 1305 351 1316 356 1542 358Z";

function Handle({ x }) {
  return (
    <g>
      <rect x={x - 8} y="1465" width="16" height="30" fill="#f2f2f2" stroke="#999" strokeWidth="2" />
      <path d={`M${x - 2} 1472v16M${x + 2} 1472v16`} stroke="#999" strokeWidth="2" />
    </g>
  );
}

function WeeklyChart() {
  return (
    <svg width="1900" height="516" viewBox="60 1014 1900 516">
      <g stroke="#f2f2f2" strokeWidth="2">
        {Y_TICKS.map(([y]) => <path key={y} d={`M196 ${y}H1894`} />)}
        {X_TICKS.map(([x]) => <path key={x} d={`M${x} 1039V1370`} />)}
      </g>
      {BARS.map(([x, top, ...parts]) =>
        parts.map(([key, bottom], i) => {
          const y = i ? parts[i - 1][1] : top;
          return <rect key={x + key} x={x} y={y} width="26" height={bottom - y} fill={C[key]} />;
        })
      )}
      {Y_TICKS.map(([y, base, label]) => (
        <g key={label}>
          <AxisText x="186" y={base} $anchor="end">{label}</AxisText>
          <AxisText x="1904.5" y={base} $anchor="start">{label}</AxisText>
        </g>
      ))}
      {X_TICKS.map(([x, label]) => <AxisText key={label} x={x + 1} y="1387.5">{label}</AxisText>)}
      <AxisText transform="translate(128 1194) rotate(-90)" $size={24}>Cases</AxisText>

      <path d="M216 1441V1519" stroke="#ccc" strokeWidth="2" />
      {YEARS.map(([x]) => <path key={x} d={`M${x} 1442V1519`} stroke="#e0e0e0" strokeWidth="2" />)}
      <path d="M216 1441H1455" stroke="#ccc" strokeWidth="2" />
      <path d={NAV_AREA} transform="translate(180 1400) scale(1.09694 .33333)" fill="#4e79a7" />
      <path d="M216 1519H1873" stroke="#4e79a7" strokeWidth="1.600" />
      {YEARS.map(([x, label], i) => <AxisText key={label} x={x + 8 - (i === 3 ? 2 : 0)} y="1511.5" $anchor="start" $color="#999">{label}</AxisText>)}
      <rect x="1455" y="1441" width="418" height="79.500" fill="#6685c2" fillOpacity=".3" />
      <path d="M1455 1441H1873V1520.500H1455" fill="none" stroke="#ccc" strokeWidth="2" />
      <path d="M1455 1441V1521" stroke="#ccc" strokeWidth="2" />
      <path d="M1456 1519H1872" stroke="#4e79a7" strokeWidth="1" />
      <Handle x={1455} />
      <Handle x={1873} />
    </svg>
  );
}

export default function App() {
  return (
    <Page>
      <GlobalStyle />
      <Header>
        <Brand>
          COVID-19 Epi Dashboard <Updated>data updated 2023-12-22 00:00 CET</Updated>
        </Brand>
        <NavTab $active><FaGlobeAfrica size={28} /></NavTab>
        <NavTab><FaTable size={29} />PHSM</NavTab>
        <NavTab $gap={12}><FaInfo size={24} />About</NavTab>
        <Logos><HeaderLogos /></Logos>
      </Header>

      <TopRow>
        <Sidebar>
          <Field $gap={41}>
            <FieldLabel>Region focus</FieldLabel>
            <Select>Worldwide<Caret /></Select>
          </Field>
          <Field>
            <FieldLabel>Data source</FieldLabel>
            <Group><Toggle $active>WHO</Toggle></Group>
          </Field>
          <Field>
            <FieldLabel>Indicator</FieldLabel>
            <Group>
              <Toggle $active>Cases</Toggle>
              <Toggle>Deaths</Toggle>
            </Group>
          </Field>
          <Field>
            <FieldLabel>Time period</FieldLabel>
            <DateRange>
              <DateCell>2020-01-03</DateCell>
              <DateCell $mid>to</DateCell>
              <DateCell>2023-12-19</DateCell>
            </DateRange>
          </Field>
        </Sidebar>

        <Stats>
          <StatsTitle>Worldwide</StatsTitle>
          <Cards>
            <Card $color="#0073b7">
              <CardTitle>Confirmed Cases</CardTitle>
              <CardValue>772,920,457</CardValue>
              <Sparkline left={460} d={CASES_LINE} label="weekly cases" />
            </Card>
            <Card $color="#dd4b39">
              <CardTitle>Confirmed Deaths</CardTitle>
              <CardValue>6,995,275</CardValue>
              <Sparkline left={830} d={DEATHS_LINE} />
            </Card>
          </Cards>
        </Stats>

        <MapCard>
          <MapFrame>
            <WorldMap />
            <MapControls>
              <Control>
                <ControlCell $height={58} $drop={9}>
                  <svg width="24" height="24"><path d="M0 12H24M12 0V24" stroke="#000" strokeWidth="4" /></svg>
                </ControlCell>
                <ControlCell $height={62} $drop={9}>
                  <svg width="24" height="24"><path d="M0 12H24" stroke="#000" strokeWidth="4" /></svg>
                </ControlCell>
              </Control>
              <Control>
                <ControlCell $drop={1}>
                  <svg width="32" height="32" fill="none" stroke="#404040" strokeWidth="4">
                    <path d="M2 12V2H12M20 2H30V12M30 20V30H20M12 30H2V20" />
                  </svg>
                </ControlCell>
              </Control>
              <Control>
                <ControlCell $drop={4}>
                  <svg width="18" height="18" fill="none" stroke="#000" strokeWidth="1.700">
                    <path d="M.600 .600L6.800 6.800M6.900 1.800V6.900H1.800M17.400 .600L11.200 6.800M11.100 1.800V6.900H16.200M.600 17.400L6.800 11.200M6.900 16.200V11.100H1.800M17.400 17.400L11.200 11.200M11.100 16.200V11.100H16.200" />
                  </svg>
                </ControlCell>
              </Control>
              <Control>
                <ControlCell $size={88}><LayersIcon /></ControlCell>
              </Control>
            </MapControls>
            <Hint>click country on<br />map to filter</Hint>
            <SizeLegend>
              <LegendTitle>Confirmed Cases</LegendTitle>
              <svg width="262" height="134" viewBox="2068 206 262 134">
                <g fill="none" stroke="#7d7d7d" strokeWidth="2">
                  <circle cx="2199" cy="278" r="59.500" />
                  <circle cx="2199" cy="294.500" r="43" />
                  <circle cx="2199" cy="325.500" r="12.200" />
                </g>
                <g fill="#555" fontFamily={arial} fontSize="22" textAnchor="end">
                  <text x="2328" y="232.500">105.0M</text>
                  <text x="2328" y="266">55.0M</text>
                  <text x="2328" y="327">5.0M</text>
                </g>
              </svg>
            </SizeLegend>
            <TrendLegend>
              <TrendTitle>14 day Cases Trend</TrendTitle>
              {TREND.map(([label, color]) => (
                <TrendRow key={label}><Swatch $color={color} />{label}</TrendRow>
              ))}
            </TrendLegend>
            <Attribution>
              <MapLink>Leaflet</MapLink> | © <MapLink>OpenStreetMap</MapLink> contributors © <MapLink>CARTO</MapLink>
            </Attribution>
          </MapFrame>
        </MapCard>
      </TopRow>

      <ChartCard>
        <ChartHeader>
          <ChartTitle>Worldwide weekly cases</ChartTitle>
          <Group>
            <Toggle $active $white $width={68}>
              <svg width="26" height="26" viewBox="0 0 26 26" fill="none" stroke="#333" strokeWidth="3" strokeLinecap="round">
                <path d="M2.500 3V21Q2.500 22.500 4 22.500H24" strokeWidth="2.600" />
                <path d="M8.500 14V17.500M13 9V17.500M17.500 12V17.500M22.500 5V17.500" strokeWidth="2.600" />
              </svg>
            </Toggle>
            <Toggle $white $width={66}>
              <svg width="26" height="26" viewBox="0 0 26 26" fill="none" stroke="#333" strokeWidth="2.600" strokeLinecap="round" strokeLinejoin="round">
                <path d="M2.500 3V21Q2.500 22.500 4 22.500H24" />
                <path d="M7.500 15L12.500 9.500 16 13 23 6" />
              </svg>
            </Toggle>
          </Group>
        </ChartHeader>
        <RangeRow>
          <RangeCaption>Zoom</RangeCaption>
          {["1m", "3m", "6m", "YTD", "1y", "All"].map((label) => (
            <RangeButton key={label} $active={label === "1y"}>{label}</RangeButton>
          ))}
          <RangeDates>
            <span>Dec 19, 2022</span>
            <svg width="18" height="16" fill="none" stroke="#666" strokeWidth="2"><path d="M0 8H16M9 1L16.500 8 9 15" /></svg>
            <span>Dec 19, 2023</span>
          </RangeDates>
        </RangeRow>
        <ChartBody>
          <WeeklyChart />
          <Legend>
            {COUNTRIES.map(([name, color]) => (
              <LegendItem key={name}><Dot $color={color} />{name}</LegendItem>
            ))}
          </Legend>
        </ChartBody>
      </ChartCard>
    </Page>
  );
}
